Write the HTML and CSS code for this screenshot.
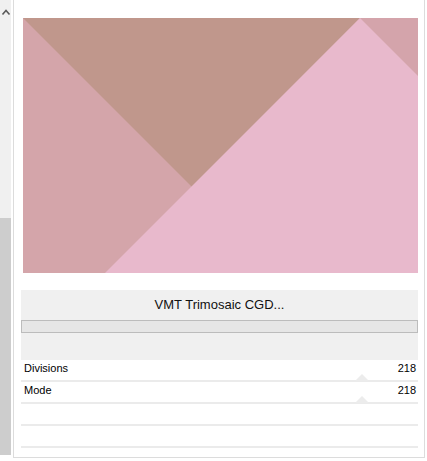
FILE: index.html
```html
<!DOCTYPE html>
<html>
<head>
<meta charset="utf-8">
<link rel="stylesheet" href="styles.css">
</head>
<body>
<div class="app">
  <div class="scroll">
    <div class="scroll-track">
      <svg class="chev" width="11" height="20" viewBox="0 0 11 20"><path d="M2.5 14.5 L6 10.5 L9.5 14.5" fill="none" stroke="#5a5a5a" stroke-width="1.6"/></svg>
    </div>
    <div class="scroll-thumb"></div>
  </div>
  <div class="gap"></div>
  <div class="frame">
    <svg class="preview" width="395" height="255" viewBox="0 0 395 255">
      <rect width="395" height="255" fill="#d4a5aa"/>
      <polygon points="0,0 337,0 169,169" fill="#c0978c"/>
      <polygon points="337,0 395,0 395,58" fill="#d4a4ab"/>
      <polygon points="337,0 395,58 395,255 82,255" fill="#e8b9cc"/>
    </svg>
    <div class="panel">
      <div class="title">VMT Trimosaic CGD...</div>
      <div class="progress"></div>
    </div>
    <div class="rows">
      <div class="row"><span>Divisions</span><span>218</span><i class="mark"></i></div>
      <div class="row"><span>Mode</span><span>218</span><i class="mark"></i></div>
      <div class="row"></div>
      <div class="row"></div>
    </div>
  </div>
</div>
</body>
</html>
```

FILE: styles.css
```css
html, body {
  margin: 0;
  padding: 0;
  background: #ffffff;
}
body {
  width: 427px;
  height: 461px;
  overflow: hidden;
  font-family: "Liberation Sans", Arial, sans-serif;
  color: #000;
}
.app {
  display: flex;
  height: 461px;
}
.scroll {
  width: 11px;
  display: flex;
  flex-direction: column;
}
.scroll-track {
  height: 218px;
  background: #f0f0f0;
}
.chev {
  display: block;
}
.scroll-thumb {
  height: 237px;
  background: #cdcdcd;
}
.gap {
  width: 2px;
}
.frame {
  width: 410px;
  height: 457px;
  border-left: 1px solid #dcdcdc;
  border-right: 1px solid #dcdcdc;
  border-bottom: 1px solid #dcdcdc;
  display: flex;
  flex-direction: column;
}
.preview {
  display: block;
  margin: 18px 0 0 9px;
}
.panel {
  margin: 17px 0 0 7px;
  width: 397px;
  height: 70px;
  background: #f0f0f0;
  display: flex;
  flex-direction: column;
}
.title {
  height: 30px;
  line-height: 29px;
  text-align: center;
  font-size: 13px;
  color: #111;
}
.progress {
  height: 11px;
  border: 1px solid #bcbcbc;
  background: #e6e6e6;
}
.rows {
  margin-left: 7px;
  width: 397px;
  display: flex;
  flex-direction: column;
}
.row {
  position: relative;
  height: 20px;
  border-bottom: 2px solid #ebebeb;
  display: flex;
  justify-content: space-between;
  align-items: flex-start;
  padding: 0 2px 0 3px;
  font-size: 11px;
  line-height: 16px;
}
.mark {
  position: absolute;
  left: 334px;
  bottom: -1px;
  width: 0;
  height: 0;
  border-left: 7px solid transparent;
  border-right: 7px solid transparent;
  border-bottom: 7px solid #ececec;
}
```
